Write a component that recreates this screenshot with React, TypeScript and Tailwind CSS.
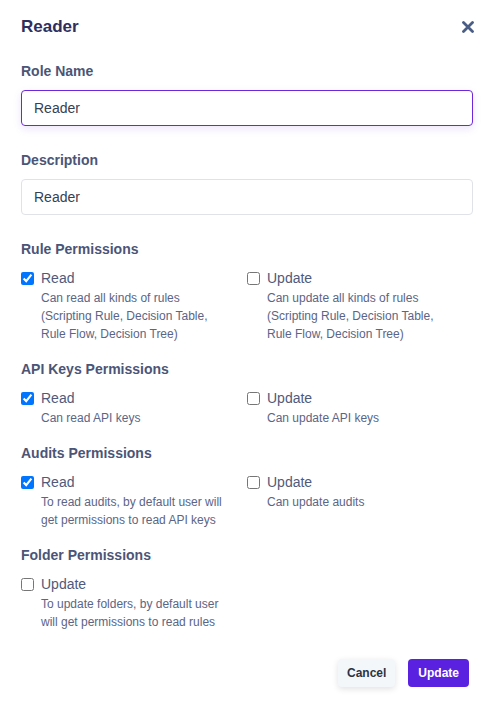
import React from 'react';

type Perm = { label: string; desc: string; checked: boolean };

function PermItem({ p }: { p: Perm }) {
  return (
    <div className="flex gap-[7px]">
      <input
        type="checkbox"
        defaultChecked={p.checked}
        className="mt-[4px] h-[13px] w-[13px] shrink-0 accent-[#0075ff]"
      />
      <div className="min-w-0">
        <div className="text-[14px] leading-5 text-[#4f5a7c]">{p.label}</div>
        <div className="mt-px max-w-[190px] text-[12px] leading-[18px] text-[#5b6586]">{p.desc}</div>
      </div>
    </div>
  );
}

function Section({ title, perms, className }: { title: string; perms: Perm[]; className?: string }) {
  return (
    <div className={className}>
      <div className="text-[14px] font-bold leading-5 text-[#4b5577]">{title}</div>
      <div className="mt-[9px] grid grid-cols-[226px_1fr]">
        {perms.map((p) => (
          <PermItem key={p.label} p={p} />
        ))}
      </div>
    </div>
  );
}

export default function App() {
  return (
    <div
      className="min-h-[710px] w-[497px] bg-white pl-[21px] pr-[24px] pt-[15px]"
      style={{ fontFamily: '"Liberation Sans", Arial, sans-serif' }}
    >
      {/* Header */}
      <div className="flex h-6 items-center justify-between">
        <h2 className="text-[17px] font-bold leading-6 text-[#2f2e5c]">Reader</h2>
        <button className="-mr-[1px] text-[#4a5d85]">
          <svg width="12" height="12" viewBox="0 0 12 12">
            <path d="M1.5 1.5 L10.5 10.5 M10.5 1.5 L1.5 10.5" stroke="currentColor" strokeWidth="2.8" strokeLinecap="round" />
          </svg>
        </button>
      </div>

      {/* Role Name */}
      <label className="mt-[22px] block text-[14px] font-bold leading-5 text-[#4b5577]">Role Name</label>
      <input
        defaultValue="Reader"
        className="mt-[9px] block h-9 w-full rounded-[4px] border border-[#6d28d9] px-3 text-[14px] text-gray-700 shadow-[0_3px_8px_rgba(109,40,217,0.12)] outline-none"
      />

      {/* Description */}
      <label className="mt-[24px] block text-[14px] font-bold leading-5 text-[#4b5577]">Description</label>
      <input
        defaultValue="Reader"
        className="mt-[9px] block h-9 w-full rounded-[4px] border border-[#dfe2e8] px-3 text-[14px] text-gray-700 outline-none"
      />

      <Section
        className="mt-[24px]"
        title="Rule Permissions"
        perms={[
          { label: 'Read', desc: 'Can read all kinds of rules (Scripting Rule, Decision Table, Rule Flow, Decision Tree)', checked: true },
          { label: 'Update', desc: 'Can update all kinds of rules (Scripting Rule, Decision Table, Rule Flow, Decision Tree)', checked: false },
        ]}
      />
      <Section
        className="mt-[16px]"
        title="API Keys Permissions"
        perms={[
          { label: 'Read', desc: 'Can read API keys', checked: true },
          { label: 'Update', desc: 'Can update API keys', checked: false },
        ]}
      />
      <Section
        className="mt-[16px]"
        title="Audits Permissions"
        perms={[
          { label: 'Read', desc: 'To read audits, by default user will get permissions to read API keys', checked: true },
          { label: 'Update', desc: 'Can update audits', checked: false },
        ]}
      />
      <Section
        className="mt-[16px]"
        title="Folder Permissions"
        perms={[
          { label: 'Update', desc: 'To update folders, by default user will get permissions to read rules', checked: false },
        ]}
      />

      {/* Footer */}
      <div className="mr-[4px] mt-[28px] flex justify-end gap-[13px]">
        <button className="h-7 rounded-[4px] bg-[#f4f7fa] px-[9px] text-[12px] font-bold text-[#2d3340] shadow-[0_2px_6px_rgba(0,0,0,0.12)]">
          Cancel
        </button>
        <button className="h-7 rounded-[4px] bg-[#5b21e0] px-[10px] text-[12px] font-bold text-white">
          Update
        </button>
      </div>
    </div>
  );
}
